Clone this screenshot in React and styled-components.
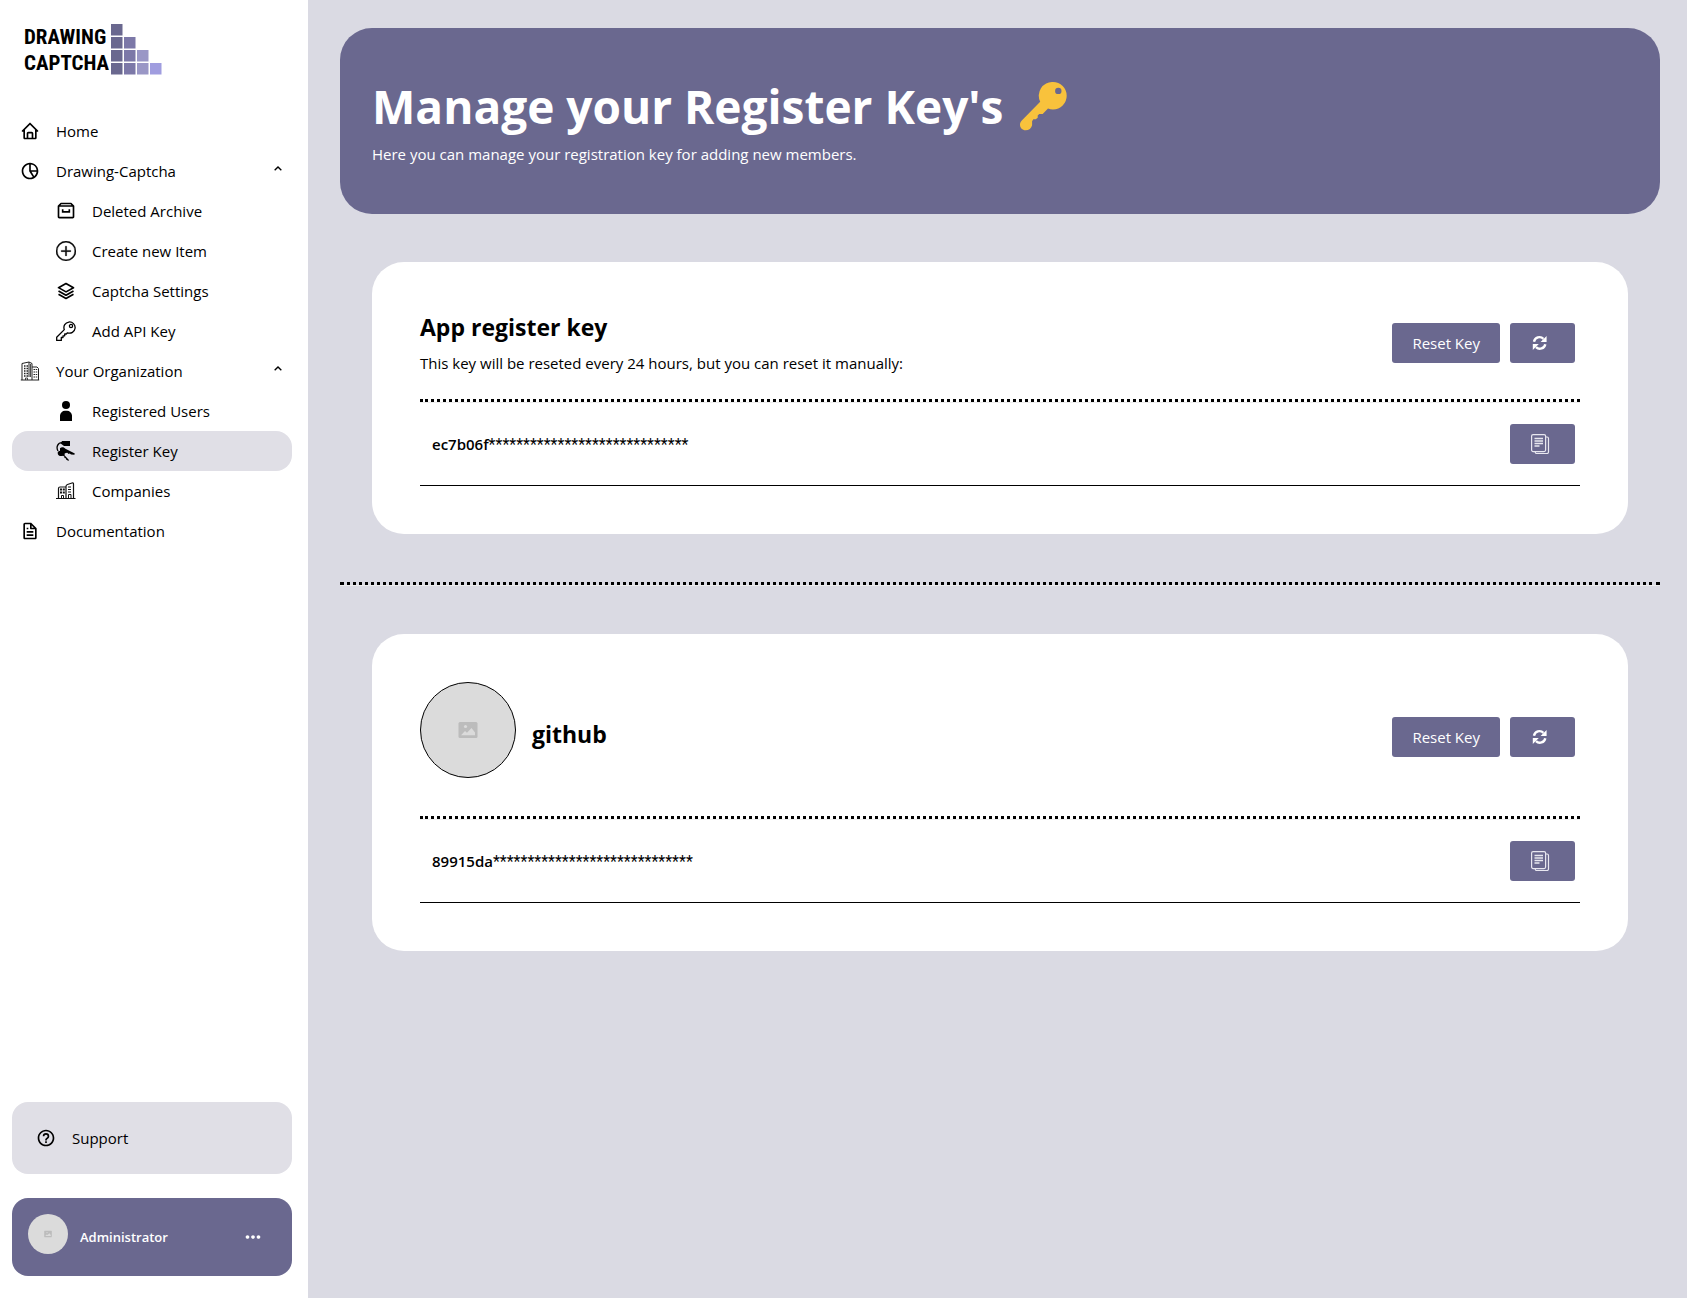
import React, { useState } from "react";
import styled, { createGlobalStyle } from "styled-components";
import {
  BiArchive,
  BiChevronUp,
  BiDotsHorizontalRounded,
  BiFile,
  BiHelpCircle,
  BiHome,
  BiLayer,
  BiPieChartAlt2,
} from "react-icons/bi";
import { BsPlusCircle } from "react-icons/bs";

const GlobalStyle = createGlobalStyle`
  * {
    box-sizing: border-box;
  }

  body {
    margin: 0;
    background-color: #dadae3;
    color: #000;
    font-family: "Open Sans", "Noto Sans", sans-serif;
    font-size: 15px;
    line-height: 24px;
  }

  h1, h2, p, ul {
    margin: 0;
    padding: 0;
  }

  button {
    font: inherit;
    cursor: pointer;
  }

  svg {
    display: block;
    flex-shrink: 0;
  }
`;

const Page = styled.div`
  display: flex;
  min-height: 100vh;
`;

const Sidebar = styled.aside`
  display: flex;
  flex-direction: column;
  flex-shrink: 0;
  width: 308px;
  padding: 24px 16px 22px 12px;
  background-color: #fff;
`;

const Logo = styled.a`
  display: flex;
  gap: 3px;
  height: 51px;
  padding-left: 12px;
  margin-bottom: 36px;
  color: #000;
  text-decoration: none;
`;

const LogoText = styled.span`
  width: 84px;
  font-family: "Roboto Condensed", "Roboto", sans-serif;
  font-size: 21px;
  font-weight: 700;
  line-height: 26px;
`;

const NavList = styled.ul`
  list-style: none;
`;

const NavLink = styled.a`
  display: flex;
  align-items: center;
  gap: 16px;
  width: 100%;
  height: 40px;
  padding: 0 8px 0 ${(props) => (props.$nested ? 44 : 8)}px;
  border: 0;
  border-radius: 16px;
  background-color: ${(props) => (props.$active ? "#e0dfe6" : "transparent")};
  color: #000;
  text-align: left;
  text-decoration: none;

  > span {
    flex: 1;
  }
`;

const Chevron = styled(BiChevronUp)`
  transform: rotate(${(props) => (props.$open ? 0 : 180)}deg);
  margin: 0 -2px 4px 0;
`;

const SidebarFooter = styled.div`
  display: flex;
  flex-direction: column;
  gap: 24px;
  margin-top: auto;
`;

const SupportLink = styled.a`
  display: flex;
  align-items: center;
  gap: 16px;
  height: 72px;
  padding: 0 24px;
  border-radius: 16px;
  background-color: #e0dfe6;
  color: #000;
  text-decoration: none;
`;

const Profile = styled.div`
  display: flex;
  gap: 12px;
  height: 78px;
  padding: 16px 28px 16px 16px;
  border-radius: 16px;
  background-color: #6a688f;
  color: #fff;
`;

const ProfileName = styled.p`
  flex: 1;
  align-self: center;
  font-size: 13px;
  font-weight: 600;
`;

const MenuButton = styled.button`
  align-self: center;
  padding: 0;
  border: 0;
  background: none;
  color: #fff;
`;

const Avatar = styled.div`
  display: flex;
  align-items: center;
  justify-content: center;
  align-self: flex-start;
  flex-shrink: 0;
  width: ${(props) => props.$size}px;
  height: ${(props) => props.$size}px;
  border: ${(props) => (props.$outlined ? "1px solid #000" : "0")};
  border-radius: 50%;
  background-color: #dbdbdb;
`;

const Main = styled.main`
  flex: 1;
  min-width: 0;
  padding: 28px 27px 48px 32px;
`;

const Banner = styled.header`
  display: flex;
  flex-direction: column;
  justify-content: center;
  min-height: 186px;
  padding: 32px;
  border-radius: 32px;
  background-color: #6a688f;
  color: #fff;

  > h1 {
    display: flex;
    align-items: center;
    gap: 16px;
    margin-bottom: 6px;
    font-size: 46px;
    line-height: 60px;
  }
`;

const Card = styled.section`
  margin: 48px 32px;
  padding: 48px;
  border-radius: 32px;
  background-color: #fff;
`;

const CardHeader = styled.div`
  display: flex;
  align-items: center;
  justify-content: space-between;
  padding-right: 5px;
  margin-bottom: 24px;
`;

const CardTitle = styled.div`
  display: flex;
  align-items: center;
  gap: 16px;
  min-height: ${(props) => (props.$tall ? 110 : 64)}px;

  h2 {
    margin-bottom: 7px;
    font-size: 23px;
    line-height: 34px;
  }
`;

const Divider = styled.hr`
  height: 4px;
  margin: 0;
  border: 0;
  border-top: 3px dotted #000;
  border-bottom: 1px solid #eeeeee;
`;

const KeyRow = styled.div`
  display: flex;
  align-items: center;
  justify-content: space-between;
  height: 83px;
  padding: 0 5px 0 12px;
  border-bottom: 1px solid #000;
  font-weight: 600;
`;

const Mask = styled.span`
  font-family: "Roboto", sans-serif;
  font-size: 16px;
  font-weight: 400;
`;

const Actions = styled.div`
  display: flex;
  gap: 10px;
`;

const Button = styled.button`
  display: flex;
  align-items: center;
  height: 40px;
  padding: 0 ${(props) => (props.$icon ? 25 : 20)}px 0 20px;
  border: 0;
  border-radius: 3px;
  background-color: #6a688f;
  color: #fff;

  &:hover {
    background-color: #7c78a8;
  }
`;

const logoColors = ["#6a688f", "#7c78a8", "#9a97c6", "#a09ddf"];

const LogoBlocks = () => (
  <svg width="51" height="51" viewBox="0 0 51 51" aria-hidden="true">
    {[0, 1, 2, 3].map((row) =>
      logoColors
        .slice(0, row + 1)
        .map((color, col) => (
          <rect
            key={`${row}-${col}`}
            x={col * 13}
            y={row * 13}
            width="11.5"
            height="11.5"
            fill={color}
          />
        ))
    )}
  </svg>
);

const KeyOutlineIcon = () => (
  <svg width="20" height="20" viewBox="0 0 20 20" fill="none" stroke="#000" strokeWidth="1.3" strokeLinejoin="round">
    <path d="M8.3 8.6A5.6 5.6 0 1 1 11.5 11.8L10.3 13H8.7v1.8H7v1.7H5.3v2.9H.7v-3.2Z" />
    <circle cx="15" cy="5" r="1.6" />
  </svg>
);

const OrganizationIcon = () => (
  <svg width="20" height="20" viewBox="0 0 20 20" fill="none" stroke="#222">
    <path d="M2 19V2.5L9 1l3 1.5V19M.8 19h18.4M12 6h5l1.5 1.5V19M9 1v15" strokeWidth="1" />
    <path d="M4 5h4M4 7.5h4M4 10h4M4 12.5h4M4 15h4" strokeWidth="1.3" strokeDasharray="1.5 1" />
    <path d="M13.5 8.5h4M13.5 11h4M13.5 13.5h4M13.5 16h4" strokeWidth="1.2" strokeDasharray="1.5 .7" />
    <path d="M5.5 19v-2h2v2M10.5 3v13" strokeWidth=".8" />
  </svg>
);

const PersonIcon = () => (
  <svg width="20" height="20" viewBox="0 0 20 20">
    <circle cx="10" cy="4" r="4" />
    <path d="M4 20v-5.5A5 5 0 0 1 9 9.8h2a5 5 0 0 1 5 4.7V20Z" />
  </svg>
);

const KeysIcon = () => (
  <svg width="20" height="20" viewBox="0 0 20 20">
    <path d="M6 0h8v5H8L4.7 2.4Z" />
    <path d="M6 1.7C1.8 1.8-.2 6 2 10" fill="none" stroke="#000" strokeWidth="1.3" />
    <path d="M4 7.2c1.5-1.6 4.4-1.2 5.4.6l9.4 4.6-.4 1.3-3.4-.2-1.2-.9-1.2.3-1.3-1.1-1.5.3C8.500 13.300 5 13 4 11Z" />
    <path d="M2 10.8c1.5-1.5 4.8-1.3 6 .4.8 1.2.8 2.1.5 3l4.7 5-1.1.6-2-1.3-.3-1.2-1.3-.4-.2-1.3-1.3-.8c-2 .7-4.5 0-5.1-1.6-.3-1-.3-1.800.1-2.400Z" />
  </svg>
);

const CompaniesIcon = () => (
  <svg width="20" height="20" viewBox="0 0 20 20" fill="none" stroke="#111">
    <path d="M0 17.5h19.5M2.5 17V7.5Q2.500 6 4 6h5.500M10 17V5.500Q10 4 11.500 3.500L16 2q1.500-.3 1.500 1v14" strokeWidth="1.2" />
    <path d="M4 8.5h5M4 11.5h5" strokeWidth="2" strokeDasharray="2 .8" />
    <path d="M12 6h3M12 8.5h3M12 11h3M5.5 17v-2.500h2V17M12.500 17v-3.500H15V17" strokeWidth="1" />
  </svg>
);

const GoldKeyIcon = () => (
  <svg width="48" height="49" viewBox="0 0 48 49" aria-hidden="true">
    <path
      fill="#f8c23c"
      fillRule="evenodd"
      d="M34 0a13.700 13.700 0 0 1 0 27.400 14 14 0 0 1-5-.9l-5.300 5.400h-3.500l-1.500 1.500 0 2.400-2 1.500h-2.400l-1.200 2v4c-.7 3-3.200 5-6.500 5-3.200 0-5.600-2.500-5.600-5.500 0-1.500.6-3 1.800-4.200L21.200 19.800A13.700 13.700 0 0 1 34 0Zm5.300 5.700a3.200 3.200 0 1 0 0 6.400 3.200 3.200 0 0 0 0-6.400Z"
    />
  </svg>
);

const RefreshIcon = () => (
  <svg width="20" height="20" viewBox="0 0 20 20" fill="none" stroke="#fff" strokeWidth="2.4">
    <path d="M4 8.8A5.5 5.5 0 0 1 13.4 5.9" />
    <path d="M15.3 11.2A5.5 5.5 0 0 1 6 14.1" />
    <path d="M16.6 3v6h-6ZM2.8 17v-6h6Z" fill="#fff" stroke="none" />
  </svg>
);

const CopyIcon = () => (
  <svg width="20" height="20" viewBox="0 0 20 20" fill="none" stroke="#e8e7f0" strokeWidth="1.2">
    <rect x="1.6" y=".6" width="14" height="17" rx="1.5" />
    <path d="M15.6 3H17a1.5 1.5 0 0 1 1.5 1.5V18a1.5 1.5 0 0 1-1.5 1.5H6.5a1.2 1.2 0 0 1-1.2-1.2v-.7" />
    <path d="M4.5 4.5h8.5M4.5 7h8.5M4.5 9.5h8.5M4.5 12h5" strokeWidth="1.3" />
  </svg>
);

const PictureIcon = ({ size }) => (
  <svg width={size} height={size} viewBox="0 0 20 20" aria-hidden="true">
    <rect x=".5" y="2" width="19" height="16" rx="1.5" fill="#bcbcbc" />
    <circle cx="7.5" cy="6.5" r="1.6" fill="#dbdbdb" />
    <path d="M3 15.3 7 11l2 1.7L13.5 8l3.5 4.5v2.8Z" fill="#dbdbdb" />
  </svg>
);

const groups = [
  {
    label: "Drawing-Captcha",
    icon: <BiPieChartAlt2 size={20} />,
    items: [
      { label: "Deleted Archive", icon: <BiArchive size={20} /> },
      {
        label: "Create new Item",
        icon: <BsPlusCircle size={20} stroke="#000" strokeWidth={0.3} />,
      },
      { label: "Captcha Settings", icon: <BiLayer size={20} /> },
      { label: "Add API Key", icon: <KeyOutlineIcon /> },
    ],
  },
  {
    label: "Your Organization",
    icon: <OrganizationIcon />,
    items: [
      { label: "Registered Users", icon: <PersonIcon /> },
      { label: "Register Key", icon: <KeysIcon />, active: true },
      { label: "Companies", icon: <CompaniesIcon /> },
    ],
  },
];

const NavGroup = ({ label, icon, items }) => {
  const [open, setOpen] = useState(true);

  return (
    <li>
      <NavLink as="button" type="button" aria-expanded={open} onClick={() => setOpen(!open)}>
        {icon}
        <span>{label}</span>
        <Chevron size={16} $open={open} />
      </NavLink>
      {open && (
        <NavList>
          {items.map((item) => (
            <li key={item.label}>
              <NavLink href="#" $nested $active={item.active}>
                {item.icon}
                <span>{item.label}</span>
              </NavLink>
            </li>
          ))}
        </NavList>
      )}
    </li>
  );
};

const KeyCard = ({ title, description, hasAvatar, keyStart }) => (
  <Card>
    <CardHeader>
      <CardTitle $tall={hasAvatar}>
        {hasAvatar && (
          <Avatar $size={96} $outlined>
            <PictureIcon size={20} />
          </Avatar>
        )}
        <div>
          <h2>{title}</h2>
          {description && <p>{description}</p>}
        </div>
      </CardTitle>
      <Actions>
        <Button type="button">Reset Key</Button>
        <Button type="button" $icon aria-label="Refresh key">
          <RefreshIcon />
        </Button>
      </Actions>
    </CardHeader>
    <Divider />
    <KeyRow>
      <p>
        {keyStart}
        <Mask>{"*".repeat(29)}</Mask>
      </p>
      <Button type="button" $icon aria-label="Copy key">
        <CopyIcon />
      </Button>
    </KeyRow>
  </Card>
);

const App = () => {
  return (
    <>
      <GlobalStyle />
      <Page>
        <Sidebar>
          <Logo href="#">
            <LogoText>
              DRAWING
              <br />
              CAPTCHA
            </LogoText>
            <LogoBlocks />
          </Logo>
          <nav>
            <NavList>
              <li>
                <NavLink href="#">
                  <BiHome size={20} />
                  <span>Home</span>
                </NavLink>
              </li>
              {groups.map((group) => (
                <NavGroup key={group.label} {...group} />
              ))}
              <li>
                <NavLink href="#">
                  <BiFile size={20} />
                  <span>Documentation</span>
                </NavLink>
              </li>
            </NavList>
          </nav>
          <SidebarFooter>
            <SupportLink href="#">
              <BiHelpCircle size={20} />
              <span>Support</span>
            </SupportLink>
            <Profile>
              <Avatar $size={40}>
                <PictureIcon size={8} />
              </Avatar>
              <ProfileName>Administrator</ProfileName>
              <MenuButton type="button" aria-label="Account menu">
                <BiDotsHorizontalRounded size={22} />
              </MenuButton>
            </Profile>
          </SidebarFooter>
        </Sidebar>
        <Main>
          <Banner>
            <h1>
              Manage your Register Key's
              <GoldKeyIcon />
            </h1>
            <p>Here you can manage your registration key for adding new members.</p>
          </Banner>
          <KeyCard
            title="App register key"
            description="This key will be reseted every 24 hours, but you can reset it manually:"
            keyStart="ec7b06f"
          />
          <Divider />
          <KeyCard title="github" hasAvatar keyStart="89915da" />
        </Main>
      </Page>
    </>
  );
};

export default App;
